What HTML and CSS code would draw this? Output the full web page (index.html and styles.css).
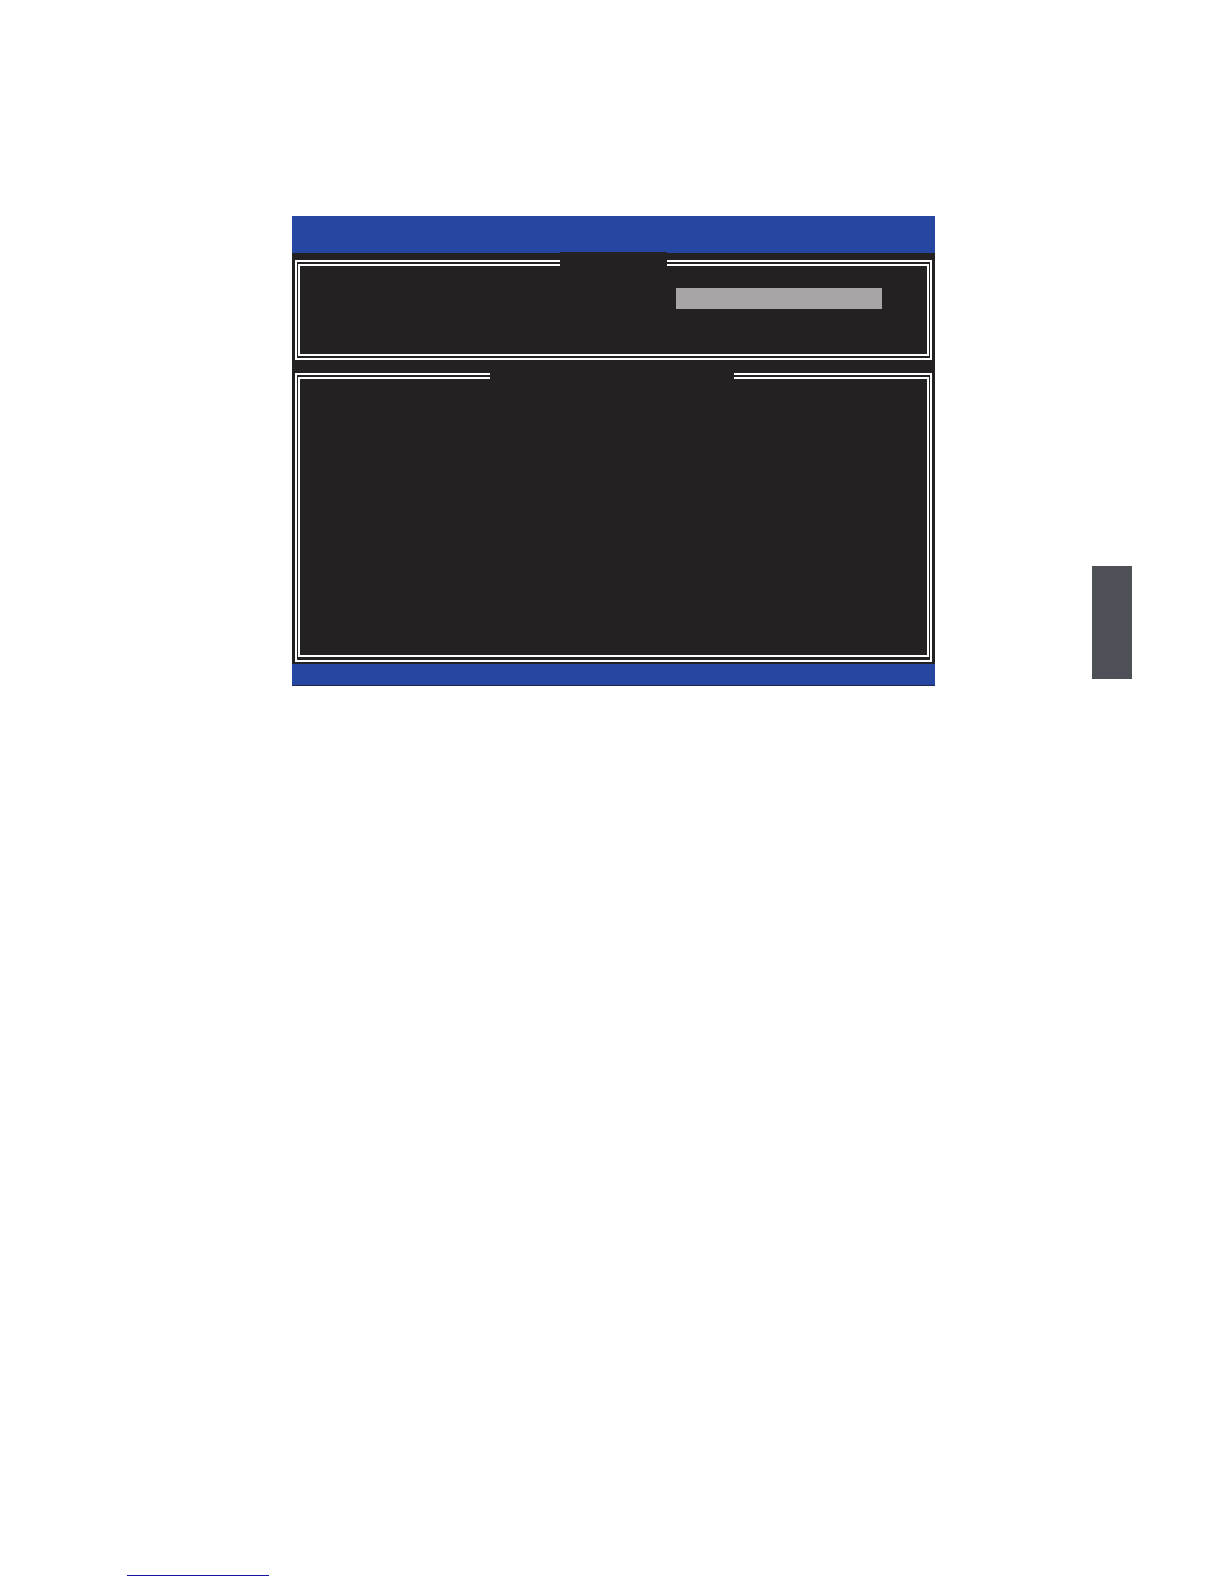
FILE: index.html
```html
<!DOCTYPE html>
<html lang="en">
<head>
<meta charset="utf-8">
<title>Setup utility</title>
<link rel="stylesheet" href="styles.css">
</head>
<body>
<main class="page">
  <section class="screen">
    <header class="screen-header"></header>
    <div class="panels">
      <div class="panel menu-panel">
        <div class="panel-title"></div>
        <div class="selection"></div>
      </div>
      <div class="panel info-panel">
        <div class="panel-title"></div>
      </div>
    </div>
    <footer class="screen-footer"></footer>
  </section>
  <aside class="chapter-tab"></aside>
</main>
<div class="page-footer">
  <div class="footer-rule"></div>
</div>
</body>
</html>
```
FILE: styles.css
```css
* {
  box-sizing: border-box;
}

body {
  display: flex;
  flex-direction: column;
  min-height: 100vh;
  margin: 0;
  background: #fff;
  font-family: "Liberation Sans", sans-serif;
}

.page {
  display: grid;
  flex: 1;
  grid-template-columns: 292fr 643fr 157fr 40fr 92fr;
  align-items: start;
  padding-top: 216px;
}

.screen {
  grid-column: 2;
  background: #242122;
}

.screen-header {
  height: 37px;
  background: #2547a1;
}

.panels {
  display: grid;
  gap: 13px;
  padding: 7px 3px 2px;
}

.panel {
  display: grid;
  align-content: start;
  border: solid #fff;
  border-style: double;
  border-width: 6px 5px;
}

.menu-panel {
  grid-template-columns: 260fr 107fr 9fr 206fr 45fr;
  min-height: 100px;
}

.info-panel {
  grid-template-columns: 190fr 244fr 193fr;
  min-height: 289px;
  border-bottom-width: 7px;
}

.panel-title {
  grid-column: 2;
  height: 14px;
  margin-top: -14px;
  background: #242122;
}

.info-panel .panel-title {
  height: 6px;
  margin-top: -6px;
}

.selection {
  grid-row: 2;
  grid-column: 4;
  height: 21px;
  margin-top: 22px;
  background: #a7a5a6;
}

.screen-footer {
  height: 22px;
  border-bottom: 1px solid #242650;
  background: #2547a1;
}

.chapter-tab {
  grid-column: 4;
  height: 113px;
  margin-top: 350px;
  background: #4e5058;
}

.page-footer {
  display: grid;
  grid-template-columns: 127fr 142fr 955fr;
  padding-bottom: 8px;
}

.footer-rule {
  grid-column: 2;
  height: 1px;
  background: #14149c;
}
```
